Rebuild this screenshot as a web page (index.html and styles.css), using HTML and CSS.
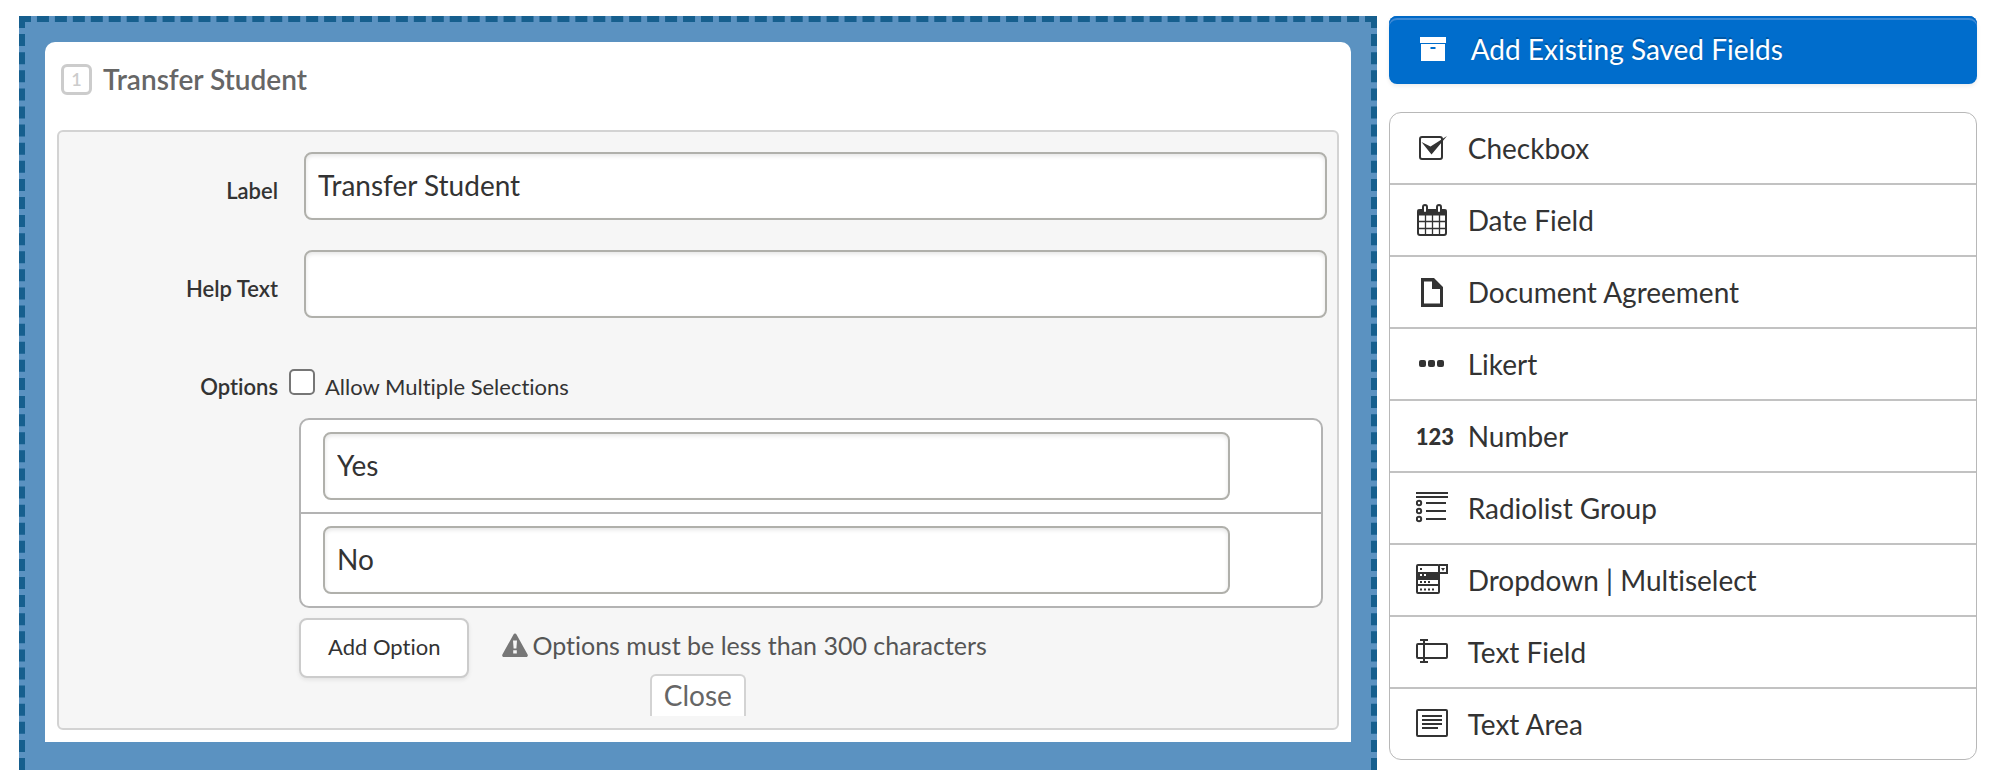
FILE: index.html
```html
<!DOCTYPE html>
<html lang="en">
<head>
    <meta charset="UTF-8">
    <meta name="viewport" content="width=device-width, initial-scale=1.0">
    <title>Form Builder</title>
    <link rel="stylesheet" href="styles.css">
</head>
<body>
    <div class="builder">
        <main class="canvas">
            <section class="card">
                <h2 class="card-title"><span class="badge">1</span>Transfer Student</h2>
                <form class="editor">
                    <div class="row">
                        <label class="row-label" for="fieldLabel">Label</label>
                        <div class="row-control"><input class="text-input" type="text" id="fieldLabel" value="Transfer Student"></div>
                    </div>
                    <div class="row">
                        <label class="row-label" for="helpText">Help Text</label>
                        <div class="row-control"><input class="text-input" type="text" id="helpText"></div>
                    </div>
                    <div class="row options-row">
                        <span class="row-label">Options</span>
                        <div class="options">
                            <div class="multiple">
                                <input type="checkbox" id="allowMultiple">
                                <label for="allowMultiple">Allow Multiple Selections</label>
                            </div>
                            <ul class="option-list">
                                <li><input class="text-input" type="text" value="Yes" aria-label="Option 1"></li>
                                <li><input class="text-input" type="text" value="No" aria-label="Option 2"></li>
                            </ul>
                            <div class="option-actions">
                                <button type="button" class="add-option">Add Option</button>
                                <span class="warning">
                                    <svg width="26" height="24" viewBox="0 0 26 24">
                                        <path d="M13 0.5c0.7 0 1.2 0.4 1.5 1L25.6 21.6c0.6 1.2-0.1 2.4-1.4 2.4H1.8C0.5 24-0.2 22.8 0.4 21.6L11.5 1.5c0.3-0.6 0.8-1 1.5-1z" fill="#777"/>
                                        <path d="M11 7.5h4l-0.6 8h-2.8zM11.2 17.2h3.6v3.4h-3.6z" fill="#f6f6f6"/>
                                    </svg>
                                    Options must be less than 300 characters
                                </span>
                            </div>
                        </div>
                    </div>
                    <button type="button" class="close">Close</button>
                </form>
            </section>
        </main>

        <aside class="sidebar">
            <button type="button" class="saved-fields">
                <svg width="28" height="28" viewBox="0 0 28 28" fill="#fff">
                    <path d="M1 2h26v6H1z"/>
                    <path fill-rule="evenodd" d="M2 9h24v17H2zM11.500 12v2h5v-2z"/>
                </svg>
                Add Existing Saved Fields
            </button>
            <ul class="field-types">
                <li><button type="button">
                    <svg class="icon" viewBox="0 0 32 32">
                        <rect x="4" y="5" width="22" height="22" rx="2" fill="none" stroke="#333" stroke-width="2"/>
                        <path d="M5.500 10l9 4.500L31 4 15.500 22.500z" fill="#333"/>
                    </svg>
                    Checkbox
                </button></li>
                <li><button type="button">
                    <svg class="icon" viewBox="0 0 32 32">
                        <rect x="2" y="6" width="28" height="25" rx="2" fill="none" stroke="#333" stroke-width="2"/>
                        <path d="M1.500 5.500h29v6h-29z" fill="#333"/>
                        <path d="M2 17.500h28M2 24.500h28M9.500 11v20M16.500 11v20M23.500 11v20" stroke="#333" stroke-width="1.300" fill="none"/>
                        <rect x="7" y="1" width="4" height="8" rx="2" fill="#fff" stroke="#333" stroke-width="2"/>
                        <rect x="21" y="1" width="4" height="8" rx="2" fill="#fff" stroke="#333" stroke-width="2"/>
                    </svg>
                    Date Field
                </button></li>
                <li><button type="button">
                    <svg class="icon" viewBox="0 0 32 32">
                        <path fill-rule="evenodd" d="M5 2h13l9 9v20H5zM8 5.500v22h16V13h-8V5.500z" fill="#333"/>
                    </svg>
                    Document Agreement
                </button></li>
                <li><button type="button">
                    <svg class="icon" viewBox="0 0 32 32" fill="#333">
                        <rect x="3" y="12" width="7" height="7" rx="2"/>
                        <rect x="12" y="12" width="7" height="7" rx="2"/>
                        <rect x="21" y="12" width="7" height="7" rx="2"/>
                    </svg>
                    Likert
                </button></li>
                <li><button type="button"><span class="digits">123</span>Number</button></li>
                <li><button type="button">
                    <svg class="icon" viewBox="0 0 32 32" fill="none" stroke="#333" stroke-width="2">
                        <path d="M0 1h32M0 5h32M10 11h20M10 19h20M10 27h20"/>
                        <circle cx="3" cy="11" r="2.200"/>
                        <circle cx="3" cy="19" r="2.200"/>
                        <circle cx="3" cy="27" r="2.200"/>
                    </svg>
                    Radiolist Group
                </button></li>
                <li><button type="button">
                    <svg class="icon" viewBox="0 0 32 32" fill="none" stroke="#333" stroke-width="2">
                        <rect x="1" y="1" width="22" height="28" rx="1"/>
                        <path d="M23 1h8v8h-8M1 15h22M1 21h22"/>
                        <path d="M1 8h23v6H1z" fill="#333" stroke="none"/>
                        <path d="M25 4h4l-2 3z" fill="#333" stroke="none"/>
                        <path d="M4 5h2M4 18h2M8 18h2M12 18h2M4 25.500h2M8 25.500h2M12 25.500h2M16 25.500h2"/>
                        <path d="M4 11h2M8 11h2" stroke="#fff"/>
                    </svg>
                    Dropdown | Multiselect
                </button></li>
                <li><button type="button">
                    <svg class="icon" viewBox="0 0 32 32" fill="none" stroke="#333" stroke-width="2">
                        <rect x="1" y="8" width="30" height="14" rx="1"/>
                        <path d="M8 4v22M4 4h8M4 26h8"/>
                    </svg>
                    Text Field
                </button></li>
                <li><button type="button">
                    <svg class="icon" viewBox="0 0 32 32" fill="none" stroke="#333" stroke-width="2">
                        <rect x="1" y="2" width="30" height="26" rx="1"/>
                        <path d="M6 8h20M6 12h20M6 16h20M6 20h16"/>
                    </svg>
                    Text Area
                </button></li>
            </ul>
        </aside>
    </div>
</body>
</html>
```
FILE: styles.css
```css
* {
    box-sizing: border-box;
}

body {
    margin: 0;
    font-family: Lato, "Open Sans", sans-serif;
    font-size: 22px;
    font-variant-ligatures: none;
    color: #333;
    background-color: #fff;
}

button,
input {
    font-family: inherit;
    font-variant-ligatures: inherit;
    color: inherit;
}

ul {
    list-style: none;
    margin: 0;
    padding: 0;
}

svg {
    flex: none;
}

.builder {
    display: grid;
    grid-template-columns: 30fr 13fr;
    gap: 12px;
    min-height: 100vh;
    padding: 16px 21px 0 19px;
}

.canvas {
    padding: 20px 20px 24px;
    border: 6px dashed #165f8e;
    border-bottom: none;
    background-color: #5b92c1;
}

.card {
    padding: 19px 12px 12px;
    border-radius: 10px 10px 0 0;
    background-color: #fff;
}

.card-title {
    display: flex;
    align-items: center;
    gap: 11px;
    margin: 0 0 33px;
    padding-left: 4px;
    font-size: 28px;
    line-height: 36px;
    font-weight: 600;
    color: #666;
}

.badge {
    width: 31px;
    height: 31px;
    border: 3px solid #ccc;
    border-radius: 6px;
    font-size: 18px;
    line-height: 25px;
    text-align: center;
    color: #ccc;
}

.editor {
    padding: 20px 10px 12px;
    border: 2px solid #d3d3d3;
    border-radius: 6px;
    background-color: #f6f6f6;
}

.row {
    display: grid;
    grid-template-columns: 209px 1fr;
    align-items: center;
    margin-bottom: 30px;
}

.row-label {
    padding-top: 9px;
    font-weight: 600;
    line-height: 28px;
    text-align: right;
}

.row-control {
    padding-left: 26px;
}

.text-input {
    display: block;
    width: 100%;
    height: 68px;
    padding: 0 12px 3px;
    border: 2px solid #b0b0ab;
    border-radius: 8px;
    background-color: #fff;
    box-shadow: inset 0 2px 4px rgba(0, 0, 0, 0.1);
    font-size: 28px;
}

.options-row {
    align-items: start;
    margin: 46px 0 0;
}

.options {
    padding: 0 4px 0 21px;
}

.multiple {
    display: flex;
    align-items: center;
    gap: 10px;
    height: 36px;
    margin: 0 0 18px -10px;
}

.multiple input {
    appearance: none;
    width: 26px;
    height: 26px;
    margin: 0;
    border: 2px solid #767676;
    border-radius: 5px;
    background-color: #fff;
}

.multiple label {
    padding-top: 9px;
    line-height: 28px;
}

.option-list {
    border: 2px solid #b3b3b3;
    border-radius: 10px;
    background-color: #fff;
}

.option-list li {
    padding: 12px 91px 12px 22px;
}

.option-list li + li {
    border-top: 2px solid #b3b3b3;
}

.option-actions {
    display: flex;
    align-items: center;
    gap: 33px;
    margin-top: 10px;
    height: 56px;
}

.add-option {
    align-self: flex-start;
    height: 60px;
    padding: 0 27px 4px;
    border: 2px solid #ccc;
    border-radius: 8px;
    background-color: #fff;
    box-shadow: 0 2px 4px rgba(0, 0, 0, 0.08);
    font-size: 22px;
}

.warning {
    display: flex;
    align-items: center;
    gap: 4px;
    padding-bottom: 2px;
    font-size: 25px;
    color: #555;
}

.close {
    display: block;
    height: 42px;
    margin: 0 auto;
    padding: 0 12px 2px;
    border: 2px solid #d3d3d3;
    border-bottom: none;
    border-radius: 6px 6px 0 0;
    background-color: #fff;
    font-size: 28px;
    line-height: 36px;
    color: #666;
}

.saved-fields {
    display: flex;
    align-items: center;
    gap: 24px;
    width: 100%;
    height: 68px;
    margin-bottom: 28px;
    padding: 0 30px 2px;
    border: none;
    border-radius: 8px;
    background-color: #006dcc;
    box-shadow: inset 0 2px 0 #0069c6, inset 0 4px 0 #3e8ad6, 0 2px 4px rgba(0, 0, 0, 0.08);
    font-size: 28px;
    text-shadow: 0 -2px 0 rgba(0, 0, 0, 0.2);
    color: #fff;
}

.field-types {
    border: 1px solid #b8b8b8;
    border-radius: 12px;
}

.field-types li + li {
    border-top: 2px solid #c2c2c2;
}

.field-types button {
    display: flex;
    align-items: center;
    gap: 20px;
    width: 100%;
    height: 70px;
    padding: 0 26px;
    border: none;
    background: none;
    font-size: 28px;
}

.icon {
    width: 32px;
    height: 32px;
}

.digits {
    width: 32px;
    font-size: 22px;
    font-weight: 900;
}
```
